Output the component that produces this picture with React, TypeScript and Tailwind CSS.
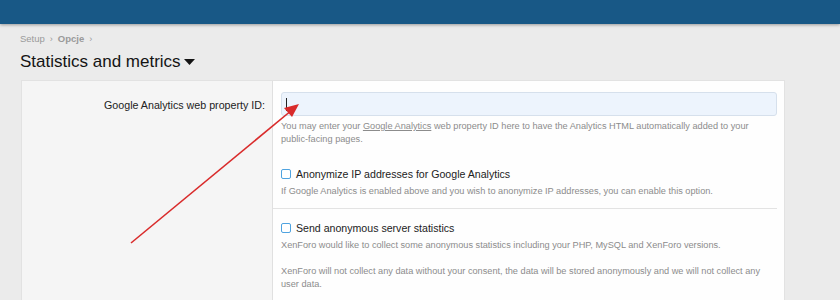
import React from "react";

export default function App() {
  return (
    <div
      className="relative w-[840px] h-[300px] overflow-hidden bg-[#ebebeb]"
      style={{ fontFamily: '"Liberation Sans", Arial, sans-serif' }}
    >
      <div className="h-[24px] bg-[#185886] shadow-[0_1px_3px_rgba(0,0,0,0.35)]" />
      <div className="px-[20px]">
        <div className="mt-[9px] flex items-center gap-[5px] text-[9.5px] leading-[12px] text-[#9a9a9a]">
          <span>Setup</span>
          <span className="text-[9px]">›</span>
          <span className="font-bold">Opcje</span>
          <span className="text-[9px]">›</span>
        </div>
        <div className="mt-[6px] flex items-center gap-[3px] text-[17px] leading-[22px] text-[#141414]">
          <span>Statistics and metrics</span>
          <svg width="11" height="7" viewBox="0 0 11 7" className="mt-[1px]">
            <polygon points="0,0 11,0 5.5,6" fill="#141414" />
          </svg>
        </div>
      </div>
      <div className="ml-[21px] mt-[7px] w-[764px] flex border border-[#e2e2e2] border-b-0 h-[240px]">
        <div className="w-[251px] bg-[#f5f5f5] border-r border-[#e0e0e0] flex-none">
          <div className="pt-[17px] pr-[7px] text-right text-[10.7px] leading-[14px] text-[#222]">
            Google Analytics web property ID:
          </div>
        </div>
        <div className="flex-1 bg-[#fefefe] px-[8px] pt-[11px] pr-[7px]">
          <div className="h-[24px] rounded-[3px] border border-[#d6e0ec] bg-[#edf4fd] flex items-center pl-[4px]">
            <div className="w-px h-[13px] bg-[#222]" />
          </div>
          <p className="mt-[4px] pr-[20px] text-[9.2px] leading-[13px] text-[#8c8c8c]">
            You may enter your <u>Google Analytics</u> web property ID here to have the Analytics HTML automatically added to your public-facing pages.
          </p>
          <div className="mt-[21px] flex items-center gap-[5px] text-[10.6px] leading-[14px] text-[#222]">
            <span className="w-[10px] h-[10px] rounded-[2px] border border-[#4fa3e0] bg-white flex-none" />
            <span>Anonymize IP addresses for Google Analytics</span>
          </div>
          <div className="mt-[4px] text-[9.2px] leading-[13px] text-[#8c8c8c]">
            If Google Analytics is enabled above and you wish to anonymize IP addresses, you can enable this option.
          </div>
          <div className="mt-[10px] -ml-[8px] border-t border-[#e3e3e3]" />
          <div className="mt-[12px] flex items-center gap-[5px] text-[10.6px] leading-[14px] text-[#222]">
            <span className="w-[10px] h-[10px] rounded-[2px] border border-[#4fa3e0] bg-white flex-none" />
            <span>Send anonymous server statistics</span>
          </div>
          <div className="mt-[4px] text-[9.2px] leading-[13px] text-[#8c8c8c]">
            XenForo would like to collect some anonymous statistics including your PHP, MySQL and XenForo versions.
          </div>
          <div className="mt-[13px] text-[9.2px] leading-[13px] text-[#8c8c8c]">
            XenForo will not collect any data without your consent, the data will be stored anonymously and we will not collect any user data.
          </div>
        </div>
      </div>
      <svg
        className="absolute left-0 top-0 pointer-events-none"
        width="840"
        height="300"
        viewBox="0 0 840 300"
      >
        <line x1="131" y1="243" x2="292" y2="110" stroke="#d92b2b" strokeWidth="1.6" />
        <polygon points="299,104 284,108 292,117" fill="#d92b2b" />
      </svg>
    </div>
  );
}
